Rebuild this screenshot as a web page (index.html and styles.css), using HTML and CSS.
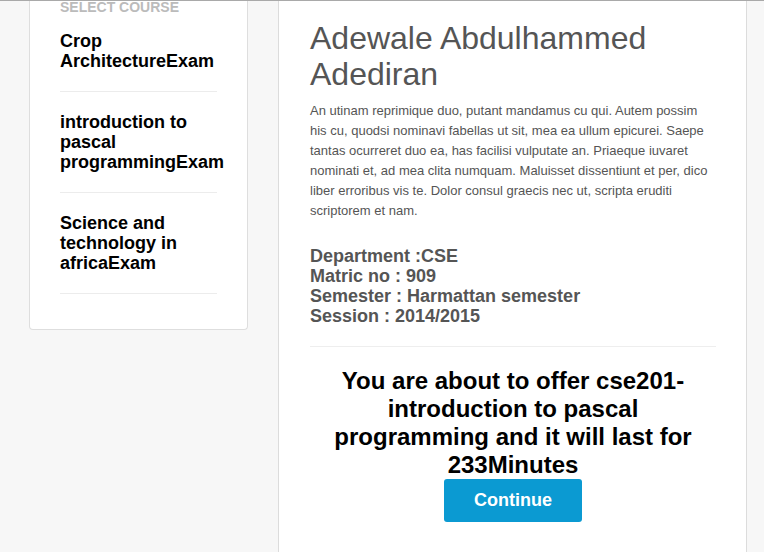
FILE: index.html
```html
<!DOCTYPE html>
<html>
<head>
<meta charset="utf-8">
<link rel="stylesheet" href="styles.css">
</head>
<body>
<div class="layout">
  <aside class="sidebar">
    <div class="card">
      <div class="card-title">SELECT COURSE</div>
      <ul class="course-list">
        <li>Crop ArchitectureExam</li>
        <li>introduction to pascal programmingExam</li>
        <li>Science and technology in africaExam</li>
      </ul>
    </div>
  </aside>
  <main class="main">
    <h1 class="name">Adewale Abdulhammed Adediran</h1>
    <p class="bio">An utinam reprimique duo, putant mandamus cu qui. Autem possim his cu, quodsi nominavi fabellas ut sit, mea ea ullum epicurei. Saepe tantas ocurreret duo ea, has facilisi vulputate an. Priaeque iuvaret nominati et, ad mea clita numquam. Maluisset dissentiunt et per, dico liber erroribus vis te. Dolor consul graecis nec ut, scripta eruditi scriptorem et nam.</p>
    <div class="info">
      <div>Department :CSE</div>
      <div>Matric no : 909</div>
      <div>Semester : Harmattan semester</div>
      <div>Session : 2014/2015</div>
    </div>
    <hr class="divider">
    <h3 class="notice">You are about to offer cse201-introduction to pascal programming and it will last for 233Minutes</h3>
    <div class="actions">
      <a class="btn">Continue</a>
    </div>
  </main>
  <div class="rest"></div>
</div>
</body>
</html>
```

FILE: styles.css
```css
html, body {
  margin: 0;
  padding: 0;
}
body {
  background: #f7f7f7;
  border-top: 1px solid #a9a9a9;
  font-family: "Liberation Sans", Arial, sans-serif;
  height: 551px;
  overflow: hidden;
}
.layout {
  display: flex;
  height: 551px;
}
.sidebar {
  width: 278px;
  flex: none;
  border-right: 1px solid #dcdcdc;
  background: #f7f7f7;
}
.card {
  margin: 0 30px 0 29px;
  background: #fff;
  border: 1px solid #dedede;
  border-top: none;
  border-radius: 0 0 4px 4px;
  padding: 0 30px 35px 30px;
}
.card-title {
  font-size: 14px;
  line-height: 13px;
  font-weight: bold;
  color: #bbbbbb;
  margin-bottom: -3px;
  white-space: nowrap;
}
.course-list {
  list-style: none;
  margin: 0;
  padding: 0;
}
.course-list li {
  padding: 20px 0;
  border-bottom: 1px solid #ececec;
  font-size: 18px;
  line-height: 20px;
  font-weight: bold;
  color: #000;
}
.main {
  width: 468px;
  flex: none;
  background: #fff;
  border-right: 1px solid #dcdcdc;
  padding: 19px 30px 0 31px;
  box-sizing: border-box;
}
.rest {
  flex: 1;
}
.name {
  margin: 0 0 9px 0;
  font-size: 32px;
  line-height: 36px;
  font-weight: normal;
  color: #555;
}
.bio {
  margin: 0 0 25px 0;
  font-size: 13px;
  line-height: 20px;
  color: #555;
}
.info {
  font-size: 18px;
  line-height: 20px;
  font-weight: bold;
  color: #555;
}
.divider {
  margin: 20px 0 20px 0;
  border: none;
  border-top: 1px solid #eeeeee;
  height: 0;
}
.notice {
  margin: 0;
  text-align: center;
  font-size: 24px;
  line-height: 28px;
  font-weight: bold;
  color: #000;
}
.actions {
  display: flex;
  justify-content: center;
}
.btn {
  display: block;
  background: #0b9ad2;
  color: #fff;
  font-size: 18px;
  line-height: 21px;
  font-weight: bold;
  padding: 11px 30px;
  border-radius: 3px;
}
```
